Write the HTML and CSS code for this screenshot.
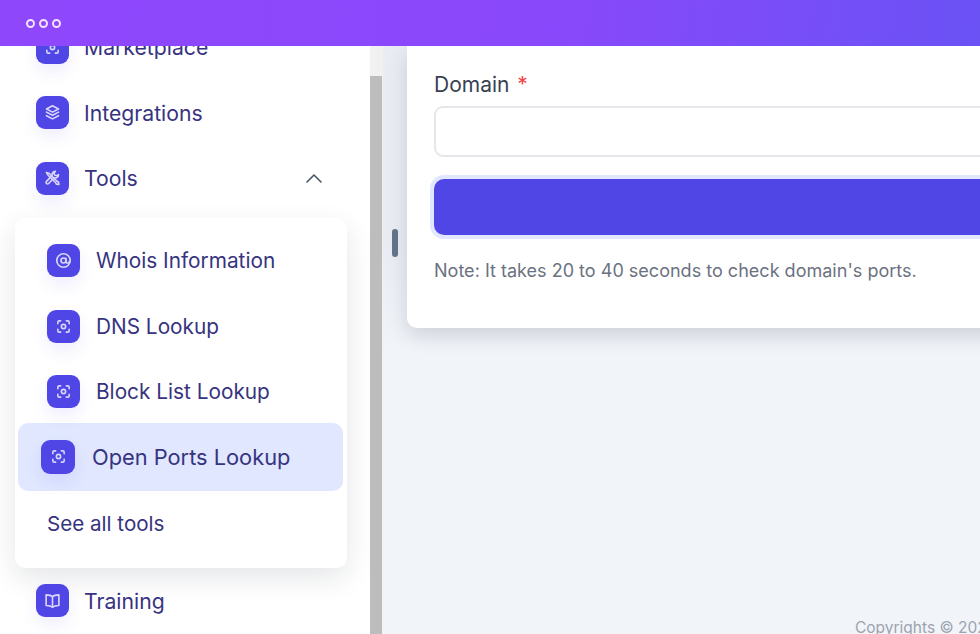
FILE: index.html
```html
<!DOCTYPE html>
<html lang="en">
<head>
    <meta charset="UTF-8">
    <meta name="viewport" content="width=device-width, initial-scale=1.0">
    <title>Open Ports Lookup</title>
    <link rel="stylesheet" href="styles.css">
</head>
<body>
    <!-- window bar -->
    <header class="topbar">
        <span class="dot"></span>
        <span class="dot"></span>
        <span class="dot"></span>
    </header>

    <div class="layout">
        <!-- sidebar -->
        <aside class="sidebar">
            <nav class="nav">
                <a class="nav-item">
                    <span class="icon">
                        <svg viewBox="0 0 24 24"><path d="M4 8V6a2 2 0 0 1 2-2h2M16 4h2a2 2 0 0 1 2 2v2M20 16v2a2 2 0 0 1-2 2h-2M8 20H6a2 2 0 0 1-2-2v-2"/><circle cx="12" cy="12" r="3"/></svg>
                    </span>
                    Marketplace
                </a>
                <a class="nav-item">
                    <span class="icon">
                        <svg viewBox="0 0 24 24"><path d="M12 2.500l8.500 4.500-8.500 4.500L3.500 7z"/><path d="M3.500 11.500l8.500 4.500 8.500-4.500"/><path d="M3.500 16.500l8.500 4.500 8.500-4.500"/></svg>
                    </span>
                    Integrations
                </a>
                <a class="nav-item">
                    <span class="icon">
                        <svg viewBox="0 0 24 24"><path d="M3.500 3.500l4 1.500 11 11 2 1 .5 3.500-3.500-.5-1-2-11-11z"/><path d="M20.500 6.500a4.500 4.500 0 0 1-6 4.500l-8 8a2.100 2.100 0 0 1-3-3l8-8a4.500 4.500 0 0 1 4.500-6l-2 3 1.500 2.500 2.500.5z"/></svg>
                    </span>
                    Tools
                    <svg class="chevron" viewBox="0 0 18 10"><path d="M2 9l7-7 7 7"/></svg>
                </a>

                <div class="submenu">
                    <a class="sub-item">
                        <span class="icon">
                            <svg viewBox="0 0 24 24"><circle cx="12" cy="12" r="9.500"/><circle cx="12" cy="12" r="3.500"/><path d="M15.500 9v4a2.500 2.500 0 0 0 5 0"/></svg>
                        </span>
                        Whois Information
                    </a>
                    <a class="sub-item">
                        <span class="icon">
                            <svg viewBox="0 0 24 24"><path d="M4 8V6a2 2 0 0 1 2-2h2M16 4h2a2 2 0 0 1 2 2v2M20 16v2a2 2 0 0 1-2 2h-2M8 20H6a2 2 0 0 1-2-2v-2"/><circle cx="12" cy="12" r="3"/></svg>
                        </span>
                        DNS Lookup
                    </a>
                    <a class="sub-item">
                        <span class="icon">
                            <svg viewBox="0 0 24 24"><path d="M4 8V6a2 2 0 0 1 2-2h2M16 4h2a2 2 0 0 1 2 2v2M20 16v2a2 2 0 0 1-2 2h-2M8 20H6a2 2 0 0 1-2-2v-2"/><circle cx="12" cy="12" r="3"/></svg>
                        </span>
                        Block List Lookup
                    </a>
                    <a class="sub-item active">
                        <span class="icon">
                            <svg viewBox="0 0 24 24"><path d="M4 8V6a2 2 0 0 1 2-2h2M16 4h2a2 2 0 0 1 2 2v2M20 16v2a2 2 0 0 1-2 2h-2M8 20H6a2 2 0 0 1-2-2v-2"/><circle cx="12" cy="12" r="3"/></svg>
                        </span>
                        Open Ports Lookup
                    </a>
                    <a class="see-all">See all tools</a>
                </div>

                <a class="nav-item training">
                    <span class="icon">
                        <svg viewBox="0 0 24 24"><path d="M12 6.500c-2-2-5-2.500-9-2.500v15c4 0 7 .5 9 2.500 2-2 5-2.500 9-2.500V4c-4 0-7 .5-9 2.500z"/><path d="M12 6.500v15"/></svg>
                    </span>
                    Training
                </a>
            </nav>
        </aside>

        <div class="scrollbar"><div class="scroll-thumb"></div></div>

        <!-- main content -->
        <main class="main">
            <div class="gutter"><span class="handle"></span></div>
            <div class="content">
                <section class="card">
                    <label class="field-label">Domain <span class="required">*</span></label>
                    <input class="field-input" type="text">
                    <button class="submit-btn" type="button"></button>
                    <p class="note">Note: It takes 20 to 40 seconds to check domain's ports.</p>
                </section>
                <footer class="copyright">Copyrights © 2024</footer>
            </div>
        </main>
    </div>
</body>
</html>
```

FILE: styles.css
```css
html, body {
    height: 100%;
}
body {
    margin: 0;
    display: flex;
    flex-direction: column;
    overflow: hidden;
    font-family: "Inter", "Liberation Sans", sans-serif;
    background-color: #f1f4f9;
}

/* window bar */
.topbar {
    position: relative;
    z-index: 2;
    height: 46px;
    flex: none;
    display: flex;
    align-items: center;
    gap: 4px;
    padding-left: 26px;
    background: linear-gradient(100deg, #8f47fc 0%, #8a48fb 55%, #6a52f5 100%);
}
.dot {
    width: 5px;
    height: 5px;
    border: 2px solid #f3e4ff;
    border-radius: 50%;
}

.layout {
    flex: 1;
    min-height: 0;
    display: flex;
}

/* sidebar */
.sidebar {
    width: 370px;
    flex: none;
    background: white;
    overflow: hidden;
}
.nav {
    margin-top: -31.750px;
    display: flex;
    flex-direction: column;
}
.nav-item {
    display: flex;
    align-items: center;
    gap: 15px;
    height: 65.500px;
    padding-left: 36px;
    padding-right: 47px;
    font-size: 21.200px;
    color: #37337f;
}
.icon {
    width: 33px;
    height: 33px;
    flex: none;
    display: flex;
    align-items: center;
    justify-content: center;
    border-radius: 9px;
    background-color: #4f46e5;
    box-shadow: 0 8px 16px rgba(79, 70, 229, 0.09);
}
.icon svg {
    width: 17px;
    height: 17px;
    fill: none;
    stroke: #d8d6fa;
    stroke-width: 2.300;
    stroke-linecap: round;
    stroke-linejoin: round;
}
.chevron {
    width: 18px;
    height: 10px;
    margin-left: auto;
    fill: none;
    stroke: #475569;
    stroke-width: 1.600;
    stroke-linecap: round;
    stroke-linejoin: round;
}

/* tools dropdown */
.submenu {
    width: 332px;
    height: 350px;
    box-sizing: border-box;
    margin: 7px 0 0 15px;
    padding: 10px 4px 0 3px;
    background: white;
    border-radius: 10px;
    box-shadow: 0 10px 28px rgba(15, 23, 42, 0.11);
}
.sub-item {
    display: flex;
    align-items: center;
    gap: 16px;
    height: 65.500px;
    padding-left: 29px;
    font-size: 20.800px;
    color: #37337f;
}
.sub-item.active {
    height: 68px;
    margin-top: -1.500px;
    padding-left: 23px;
    gap: 17px;
    border-radius: 10px;
    background-color: #e0e7ff;
    font-size: 21.800px;
}
.sub-item.active .icon {
    width: 34px;
    height: 34px;
}
.see-all {
    display: block;
    margin-top: 20.500px;
    padding-left: 29px;
    font-size: 20.600px;
    color: #37337f;
}

/* scrollbar */
.scrollbar {
    width: 13px;
    flex: none;
    padding-top: 30px;
    box-sizing: border-box;
    background-color: #f1f1f1;
}
.scroll-thumb {
    width: 12px;
    height: 100%;
    background-color: #bdbdbd;
}

/* main */
.main {
    flex: 1;
    min-width: 0;
    display: flex;
}
.gutter {
    width: 24px;
    flex: none;
    box-sizing: border-box;
    padding: 183px 0 0 9px;
    background: linear-gradient(#e9edf3 60%, #f1f4f9 90%);
    height: 340px;
}
.handle {
    display: block;
    width: 6px;
    height: 28px;
    border-radius: 3px;
    background-color: #64748b;
}
.content {
    flex: 1;
    min-width: 0;
    display: flex;
    flex-direction: column;
    position: relative;
}
.card {
    width: 700px;
    height: 282px;
    box-sizing: border-box;
    padding: 26px 0 0 27px;
    background: white;
    border-radius: 0 0 0 10px;
    box-shadow: 0 8px 20px rgba(15, 23, 42, 0.15);
}
.field-label {
    display: block;
    height: 34px;
    font-size: 21px;
    line-height: 26px;
    color: #374151;
}
.required {
    margin-left: 2px;
    color: #ef4444;
}
.field-input {
    display: block;
    width: 100%;
    height: 51px;
    box-sizing: border-box;
    border: 2px solid #e5e7eb;
    border-radius: 9px;
    background: white;
    outline: none;
}
.submit-btn {
    display: block;
    width: 100%;
    height: 56px;
    margin-top: 22px;
    border: none;
    border-radius: 10px;
    background-color: #4f46e5;
    box-shadow: 0 0 0 4px #e0e7ff;
}
.note {
    margin: 24px 0 0;
    font-size: 18.050px;
    line-height: 23px;
    color: #6b7280;
}
.copyright {
    position: absolute;
    top: 571px;
    left: 448px;
    white-space: nowrap;
    font-size: 15.500px;
    line-height: 22px;
    color: #9ca3af;
}
```
